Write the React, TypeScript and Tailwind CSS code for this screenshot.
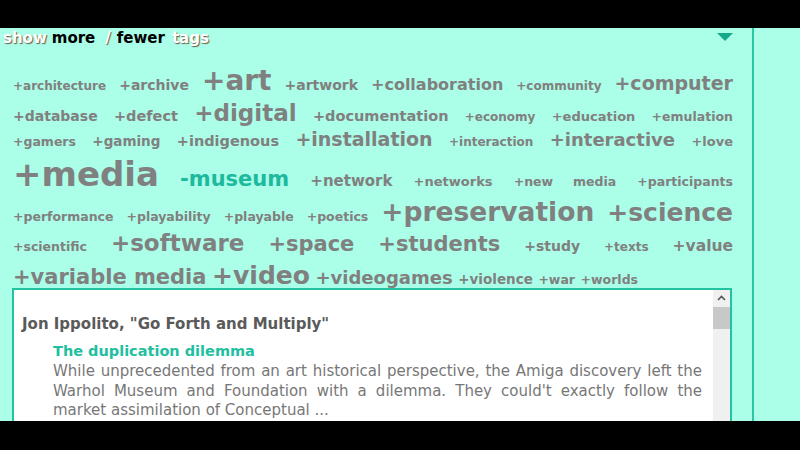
import React from 'react';

type Tag = { t: string; c: string; on?: boolean };

const rows: { mt: string; last?: boolean; tags: Tag[] }[] = [
  {
    mt: 'mt-[21px]',
    tags: [
      { t: '+architecture', c: 'text-[12px]' },
      { t: '+archive', c: 'text-[14px]' },
      { t: '+art', c: 'text-[28px]' },
      { t: '+artwork', c: 'text-[14px]' },
      { t: '+collaboration', c: 'text-[16px]' },
      { t: '+community', c: 'text-[12px]' },
      { t: '+computer', c: 'text-[19px]' },
    ],
  },
  {
    mt: 'mt-[7px]',
    tags: [
      { t: '+database', c: 'text-[14px]' },
      { t: '+defect', c: 'text-[14.5px]' },
      { t: '+digital', c: 'text-[23px]' },
      { t: '+documentation', c: 'text-[14.5px]' },
      { t: '+economy', c: 'text-[12px]' },
      { t: '+education', c: 'text-[13px]' },
      { t: '+emulation', c: 'text-[12.5px]' },
    ],
  },
  {
    mt: 'mt-[5px]',
    tags: [
      { t: '+gamers', c: 'text-[12.5px]' },
      { t: '+gaming', c: 'text-[13.5px]' },
      { t: '+indigenous', c: 'text-[14.5px]' },
      { t: '+installation', c: 'text-[19px]' },
      { t: '+interaction', c: 'text-[12px]' },
      { t: '+interactive', c: 'text-[18px]' },
      { t: '+love', c: 'text-[13px]' },
    ],
  },
  {
    mt: 'mt-[8px]',
    tags: [
      { t: '+media', c: 'text-[34px]' },
      { t: '-museum', c: 'text-[21px]', on: true },
      { t: '+network', c: 'text-[15px]' },
      { t: '+networks', c: 'text-[13px]' },
      { t: '+new media', c: 'text-[12.5px]' },
      { t: '+participants', c: 'text-[12.5px]' },
    ],
  },
  {
    mt: 'mt-[8px]',
    tags: [
      { t: '+performance', c: 'text-[12.5px]' },
      { t: '+playability', c: 'text-[12.5px]' },
      { t: '+playable', c: 'text-[12.5px]' },
      { t: '+poetics', c: 'text-[12.5px]' },
      { t: '+preservation', c: 'text-[26.5px]' },
      { t: '+science', c: 'text-[25px]' },
    ],
  },
  {
    mt: 'mt-[6px]',
    tags: [
      { t: '+scientific', c: 'text-[12.5px]' },
      { t: '+software', c: 'text-[23px]' },
      { t: '+space', c: 'text-[21px]' },
      { t: '+students', c: 'text-[21px]' },
      { t: '+study', c: 'text-[14px]' },
      { t: '+texts', c: 'text-[12px]' },
      { t: '+value', c: 'text-[15.5px]' },
    ],
  },
  {
    mt: 'mt-[8px]',
    last: true,
    tags: [
      { t: '+variable media', c: 'text-[21px]' },
      { t: '+video', c: 'text-[25px]' },
      { t: '+videogames', c: 'text-[18px]' },
      { t: '+violence', c: 'text-[13.5px]' },
      { t: '+war', c: 'text-[12.5px]' },
      { t: '+worlds', c: 'text-[12.5px]' },
    ],
  },
];

function TagRow({ mt, last, tags }: { mt: string; last?: boolean; tags: Tag[] }) {
  return (
    <div
      className={`${mt} whitespace-nowrap leading-none text-[16px] font-bold ${
        last ? 'text-left' : 'text-justify [text-align-last:justify]'
      }`}
    >
      {tags.map((tag, i) => (
        <React.Fragment key={tag.t}>
          {i > 0 && ' '}
          <a className={`${tag.c} ${tag.on ? 'text-[#1cb99f]' : 'text-[#808080]'} cursor-pointer`}>
            {tag.t}
          </a>
        </React.Fragment>
      ))}
    </div>
  );
}

export default function App() {
  return (
    <div className="w-[800px] h-[450px] flex flex-col bg-black overflow-hidden font-['DejaVu_Sans',Verdana,sans-serif]">
      <div className="h-[28px] shrink-0 bg-black" />

      <div className="flex-1 flex bg-[#abfee7] overflow-hidden">
        <div className="w-[754px] shrink-0 border-r-2 border-[#2ec5a5]">
          {/* show more / fewer tags */}
          <div className="flex items-start justify-between pt-[3px] pl-[3px] pr-[19px] leading-none text-[15px] font-bold">
            <div className="flex">
              <span className="text-white [text-shadow:1px_1px_1px_#6b5a4a]">show</span>
              <span className="ml-[5px] text-black">more</span>
              <span className="ml-[10px] text-white [text-shadow:1px_1px_1px_#6b5a4a]">/</span>
              <span className="ml-[6px] text-black">fewer</span>
              <span className="ml-[7px] text-white [text-shadow:1px_1px_1px_#6b5a4a]">tags</span>
            </div>
            <svg width="16" height="9" viewBox="0 0 16 9" className="mt-[2px]">
              <polygon points="0,0 16,0 8,8" fill="#17a98b" />
            </svg>
          </div>

          {/* tag cloud */}
          <div className="pl-[13px] pr-[19px]">
            {rows.map((r, i) => (
              <TagRow key={i} {...r} />
            ))}
          </div>

          {/* result box */}
          <div className="ml-[12px] w-[720px] h-[200px] flex bg-white border-2 border-[#22c3a2]">
            <div className="flex-1 pt-[27px] pl-[8px] pr-[11px]">
              <div className="text-[15px] leading-none font-bold text-[#5a5a5a]">
                Jon Ippolito, "Go Forth and Multiply"
              </div>
              <div className="pl-[31px]">
                <div className="mt-[12px] text-[14.5px] leading-none font-bold text-[#1fbf9f]">
                  The duplication dilemma
                </div>
                <p className="mt-[4px] text-[15px] leading-[19.5px] text-[#777777] text-justify">
                  While unprecedented from an art historical perspective, the Amiga discovery left the Warhol
                  Museum and Foundation with a dilemma. They could't exactly follow the market assimilation of
                  Conceptual ...
                </p>
              </div>
            </div>
            <div className="w-[17px] shrink-0 bg-[#f0f0f0] flex flex-col">
              <div className="h-[17px] flex items-center justify-center">
                <svg width="9" height="6" viewBox="0 0 9 6">
                  <polyline points="1,5 4.5,1.5 8,5" fill="none" stroke="#555" strokeWidth="1.6" />
                </svg>
              </div>
              <div className="h-[22px] bg-[#c8c8c8]" />
            </div>
          </div>
        </div>
        <div className="flex-1" />
      </div>

      <div className="h-[29px] shrink-0 bg-black" />
    </div>
  );
}
